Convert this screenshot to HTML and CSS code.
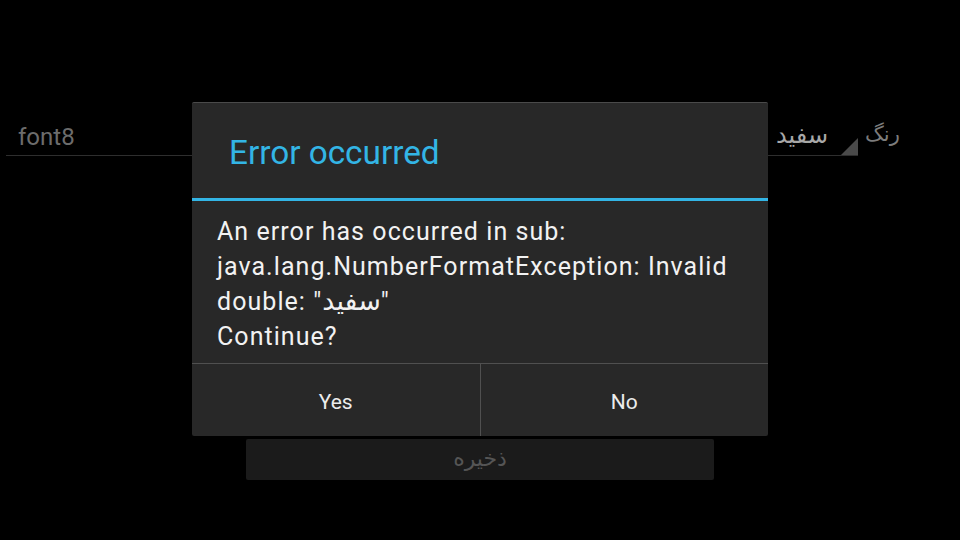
FILE: index.html
```html
<!DOCTYPE html>
<html lang="fa">
<head>
<meta charset="utf-8">
<link rel="stylesheet" href="styles.css">
</head>
<body>
<div class="screen">
  <div class="form-row">
    <div class="text-input">font8</div>
    <div class="spinner"><span class="spinner-value">سفید</span><span class="spinner-arrow"></span></div>
    <div class="label">رنگ</div>
  </div>
  <div class="save-row">
    <div class="save-btn">ذخیره</div>
  </div>

  <div class="dialog">
    <div class="dialog-title">Error occurred</div>
    <div class="dialog-divider"></div>
    <div class="dialog-body">An error has occurred in sub:<br>java.lang.NumberFormatException: Invalid<br>double: "<span class="fa">سفید</span>"<br>Continue?</div>
    <div class="dialog-buttons">
      <div class="dlg-btn">Yes</div>
      <div class="dlg-btn">No</div>
    </div>
  </div>
</div>
</body>
</html>
```

FILE: styles.css
```css
html, body {
  margin: 0;
  padding: 0;
  background: #000;
}
body {
  font-family: Roboto, "DejaVu Sans", sans-serif;
}
.screen {
  position: relative;
  width: 960px;
  height: 540px;
  background: #000;
  overflow: hidden;
}
.form-row {
  display: flex;
  align-items: flex-end;
  padding: 120px 0 0 6px;
  height: 36px;
}
.text-input {
  width: 470px;
  height: 35px;
  box-sizing: border-box;
  padding: 2px 0 0 12px;
  font-size: 24px;
  line-height: 28px;
  color: #6c6c6c;
  border-bottom: 1px solid #2e2e2e;
}
.spinner {
  margin-left: 250px;
  width: 132px;
  height: 35px;
  box-sizing: border-box;
  border-bottom: 1px solid #2e2e2e;
  display: flex;
  justify-content: flex-end;
  align-items: flex-start;
  position: relative;
}
.spinner-value {
  direction: rtl;
  font-size: 24px;
  line-height: 28px;
  color: #a8a8a8;
  margin-right: 30px;
}
.spinner-arrow {
  position: absolute;
  right: 0;
  bottom: 0;
  width: 0;
  height: 0;
  border-left: 17px solid transparent;
  border-bottom: 17px solid #4a4a4a;
}
.label {
  direction: rtl;
  margin-left: 7px;
  align-self: flex-start;
  font-size: 21px;
  line-height: 28px;
  color: #7c7c7c;
}
.save-row {
  display: flex;
  justify-content: center;
  padding-top: 283px;
  padding-right: 0;
}
.save-btn {
  width: 468px;
  height: 41px;
  background: #1b1b1b;
  border-radius: 2px;
  color: #555;
  font-size: 22px;
  line-height: 39px;
  text-align: center;
  direction: rtl;
}
.dialog {
  position: absolute;
  left: 192px;
  top: 102px;
  width: 576px;
  height: 334px;
  background: #282828;
  border-top: 1px solid #4a4a4a;
  box-sizing: border-box;
  border-radius: 2px;
  display: flex;
  flex-direction: column;
}
.dialog-title {
  height: 95px;
  padding: 4px 0 0 37px;
  font-size: 33.3px;
  line-height: 91px;
  color: #33b5e5;
  box-sizing: border-box;
}
.dialog-divider {
  height: 3px;
  background: #33b5e5;
}
.dialog-body {
  flex: 1;
  padding: 14px 25px 0 25px;
  font-size: 25px;
  letter-spacing: 1.05px;
  line-height: 34.7px;
  color: #f2f2f2;
}
.fa {
  font-family: "DejaVu Sans", sans-serif;
  font-size: 27px;
  letter-spacing: 0;
}
.dialog-buttons {
  display: flex;
  height: 72px;
  border-top: 1px solid #505050;
}
.dlg-btn {
  flex: 1;
  text-align: center;
  line-height: 76px;
  font-size: 21px;
  color: #ececec;
}
.dlg-btn + .dlg-btn {
  border-left: 1px solid #505050;
}
```
